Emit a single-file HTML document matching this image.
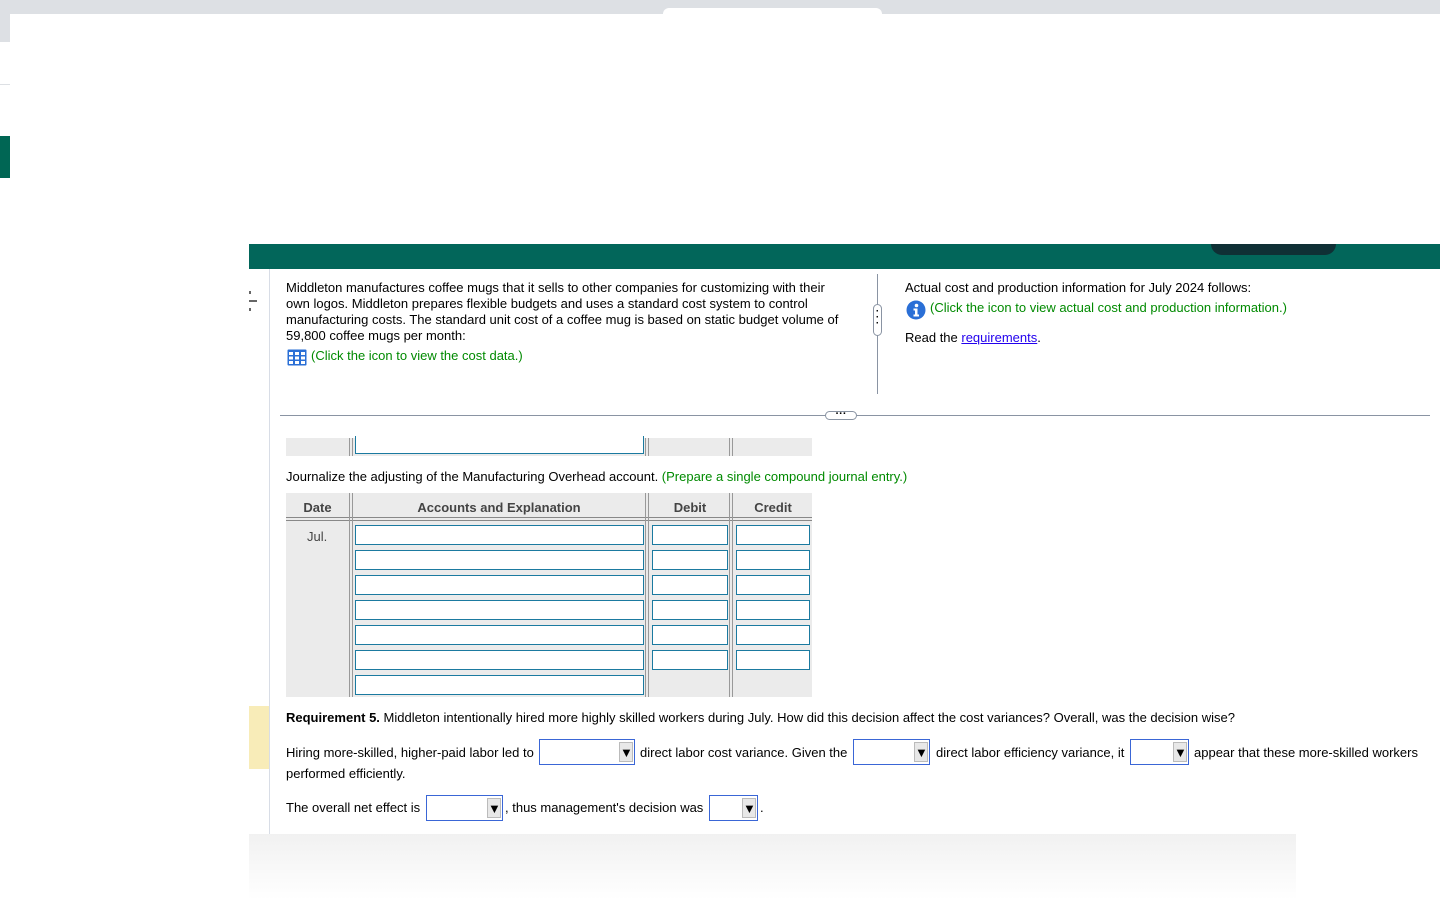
<!DOCTYPE html>
<html><head><meta charset="utf-8"><style>
*{margin:0;padding:0;box-sizing:border-box}
body{width:1440px;height:900px;position:relative;overflow:hidden;background:#fff;font-family:"Liberation Sans",Arial,sans-serif;font-size:13px;color:#000}
.a{position:absolute}
.g{color:#008a00}
.inp{position:absolute;height:20px;border:1px solid #1b7aa0;background:#fff}
.vl{position:absolute;width:4px;border-left:1px solid #999;border-right:1px solid #999}
.sel{position:absolute;height:26px;border:1px solid #3a66d6;background:#fff;top:0}
.sel span{position:absolute;right:1px;top:2px;width:14px;height:20px;background:#e8e8e8;border:1px solid #bbb;font-size:13px;text-align:center;line-height:19px;color:#000}
.t{position:absolute;white-space:nowrap;line-height:16px}
</style></head><body>
<div class="a" style="left:0;top:0;width:1440px;height:14px;background:#dde0e4"></div>
<div class="a" style="left:663px;top:8px;width:219px;height:8px;background:#fff;border-radius:6px 6px 0 0"></div>
<div class="a" style="left:0;top:14px;width:10px;height:28px;background:#dde0e4"></div>
<div class="a" style="left:0;top:84px;width:10px;height:1px;background:#dde0e4"></div>
<div class="a" style="left:0;top:136px;width:10px;height:42px;background:#006654"></div>

<div class="a" style="left:249px;top:244px;width:1191px;height:25px;background:#02665a"></div>
<div class="a" style="left:1211px;top:244px;width:125px;height:11px;background:#0f3035;border-radius:0 0 12px 12px"></div>
<div class="a" style="left:269px;top:269px;width:1px;height:565px;background:#d8dde6"></div>
<div class="a" style="left:249px;top:706px;width:20px;height:63px;background:#f8ecb8"></div>
<div class="a" style="left:249px;top:300px;width:8px;height:2px;background:#666"></div>
<div class="a" style="left:249px;top:291px;width:2px;height:3px;background:#666"></div>
<div class="a" style="left:249px;top:308px;width:2px;height:3px;background:#666"></div>

<div class="t" style="left:286px;top:280px;line-height:16px">Middleton manufactures coffee mugs that it sells to other companies for customizing with their<br>own logos. Middleton prepares flexible budgets and uses a standard cost system to control<br>manufacturing costs. The standard unit cost of a coffee mug is based on static budget volume of<br>59,800 coffee mugs per month:</div>
<svg class="a" style="left:287px;top:349px" width="20" height="17" viewBox="0 0 20 17"><rect x="0.5" y="0.5" width="19" height="16" fill="#2a6fd6" rx="1"/><g fill="#fff"><rect x="2" y="3" width="4" height="3"/><rect x="8" y="3" width="4" height="3"/><rect x="14" y="3" width="4" height="3"/><rect x="2" y="7.5" width="4" height="3"/><rect x="8" y="7.5" width="4" height="3"/><rect x="14" y="7.5" width="4" height="3"/><rect x="2" y="12" width="4" height="3"/><rect x="8" y="12" width="4" height="3"/><rect x="14" y="12" width="4" height="3"/></g></svg>
<div class="t g" style="left:311px;top:348px">(Click the icon to view the cost data.)</div>

<div class="a" style="left:877px;top:274px;width:1px;height:120px;background:#8a94a3"></div>
<div class="a" style="left:873px;top:304px;width:9px;height:32px;background:#fff;border:1px solid #8a94a3;border-radius:5px;font-size:10px;font-weight:bold;line-height:6px;text-align:center;padding-top:4px">·<br>·<br>·</div>
<div class="a" style="left:280px;top:415px;width:1150px;height:1px;background:#8a94a3"></div>
<div class="a" style="left:825px;top:411px;width:32px;height:9px;background:#fff;border:1px solid #8a94a3;border-radius:5px;font-size:11px;font-weight:bold;line-height:4px;text-align:center">···</div>

<div class="t" style="left:905px;top:280px">Actual cost and production information for July 2024 follows:</div>
<svg class="a" style="left:906px;top:300px" width="20" height="20" viewBox="0 0 20 20"><circle cx="10" cy="10" r="9.5" fill="#2a6fd6"/><circle cx="10.5" cy="5.5" r="1.8" fill="#fff"/><path d="M7.5 8.5h4v6h1.5v2h-5.5v-2h1.5v-4h-1.5z" fill="#fff"/></svg>
<div class="t g" style="left:930px;top:300px">(Click the icon to view actual cost and production information.)</div>
<div class="t" style="left:905px;top:330px">Read the <span style="color:#2200ee;text-decoration:underline">requirements</span>.</div>

<div class="a" style="left:286px;top:438px;width:526px;height:18px;background:#ebebeb"></div>
<div class="vl" style="left:349px;top:438px;height:18px"></div>
<div class="vl" style="left:645px;top:438px;height:18px"></div>
<div class="vl" style="left:729px;top:438px;height:18px"></div>
<div class="a" style="left:355px;top:436px;width:289px;height:18px;border:1px solid #1b7aa0;border-top:none;background:#fff"></div>

<div class="t" style="left:286px;top:469px">Journalize the adjusting of the Manufacturing Overhead account. <span class="g">(Prepare a single compound journal entry.)</span></div>

<div class="a" style="left:286px;top:493px;width:526px;height:204px;background:#ebebeb"></div>
<div class="a" style="left:286px;top:517px;width:526px;height:4px;border-top:1px solid #888;border-bottom:1px solid #888"></div>
<div class="vl" style="left:349px;top:493px;height:204px"></div>
<div class="vl" style="left:645px;top:493px;height:204px"></div>
<div class="vl" style="left:729px;top:493px;height:204px"></div>
<div class="t" style="left:286px;top:500px;width:63px;text-align:center;font-weight:bold;color:#444">Date</div>
<div class="t" style="left:353px;top:500px;width:292px;text-align:center;font-weight:bold;color:#444">Accounts and Explanation</div>
<div class="t" style="left:650px;top:500px;width:80px;text-align:center;font-weight:bold;color:#444">Debit</div>
<div class="t" style="left:734px;top:500px;width:78px;text-align:center;font-weight:bold;color:#444">Credit</div>
<div class="t" style="left:307px;top:529px;color:#444">Jul.</div>

<div class="inp" style="left:355px;top:525px;width:289px"></div><div class="inp" style="left:652px;top:525px;width:76px"></div><div class="inp" style="left:736px;top:525px;width:74px"></div>
<div class="inp" style="left:355px;top:550px;width:289px"></div><div class="inp" style="left:652px;top:550px;width:76px"></div><div class="inp" style="left:736px;top:550px;width:74px"></div>
<div class="inp" style="left:355px;top:575px;width:289px"></div><div class="inp" style="left:652px;top:575px;width:76px"></div><div class="inp" style="left:736px;top:575px;width:74px"></div>
<div class="inp" style="left:355px;top:600px;width:289px"></div><div class="inp" style="left:652px;top:600px;width:76px"></div><div class="inp" style="left:736px;top:600px;width:74px"></div>
<div class="inp" style="left:355px;top:625px;width:289px"></div><div class="inp" style="left:652px;top:625px;width:76px"></div><div class="inp" style="left:736px;top:625px;width:74px"></div>
<div class="inp" style="left:355px;top:650px;width:289px"></div><div class="inp" style="left:652px;top:650px;width:76px"></div><div class="inp" style="left:736px;top:650px;width:74px"></div>
<div class="inp" style="left:355px;top:675px;width:289px"></div>

<div class="t" style="left:286px;top:710px"><b>Requirement 5.</b> Middleton intentionally hired more highly skilled workers during July. How did this decision affect the cost variances? Overall, was the decision wise?</div>

<div class="a" style="left:286px;top:739px;width:1150px;height:26px">
<div class="t" style="left:0;top:6px">Hiring more-skilled, higher-paid labor led to</div>
<div class="sel" style="left:253px;width:96px"><span>▼</span></div>
<div class="t" style="left:354px;top:6px">direct labor cost variance. Given the</div>
<div class="sel" style="left:567px;width:77px"><span>▼</span></div>
<div class="t" style="left:650px;top:6px">direct labor efficiency variance, it</div>
<div class="sel" style="left:844px;width:59px"><span>▼</span></div>
<div class="t" style="left:908px;top:6px">appear that these more-skilled workers</div>
</div>
<div class="t" style="left:286px;top:766px">performed efficiently.</div>

<div class="a" style="left:286px;top:795px;width:600px;height:26px">
<div class="t" style="left:0;top:5px">The overall net effect is</div>
<div class="sel" style="left:140px;width:77px"><span>▼</span></div>
<div class="t" style="left:219px;top:5px">, thus management's decision was</div>
<div class="sel" style="left:423px;width:49px"><span>▼</span></div>
<div class="t" style="left:474px;top:5px">.</div>
</div>

<div class="a" style="left:249px;top:834px;width:1047px;height:66px;background:linear-gradient(#f1f1f1,#fff)"></div>
</body></html>
